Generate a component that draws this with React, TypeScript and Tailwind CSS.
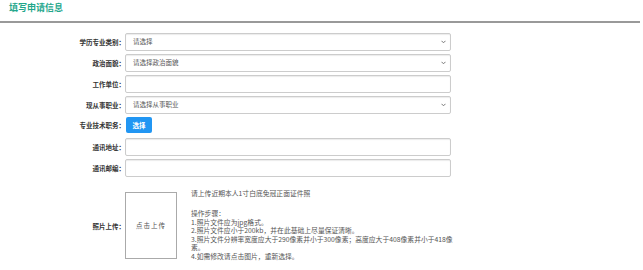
import React from 'react';

const FONT = { fontFamily: '"Noto Sans CJK SC", "Liberation Sans", sans-serif' };

const labelCls = 'w-[125px] shrink-0 text-right text-[6.5px] leading-[8px] font-bold text-[#333]';
const boxCls =
  'w-[326px] h-[18px] border border-[#ccc] rounded-[2px] shadow-[inset_0_1px_1px_rgba(0,0,0,0.08)] bg-white flex items-center pl-[7px] pr-[4px] text-[6.5px] text-[#555]';

const Chevron = () => (
  <svg width="5" height="4" viewBox="0 0 5 4" className="ml-auto">
    <polyline points="0.5,0.8 2.5,2.8 4.5,0.8" fill="none" stroke="#777" strokeWidth="1" />
  </svg>
);

const Row: React.FC<{ label: string; children: React.ReactNode }> = ({ label, children }) => (
  <div className="flex items-center h-[18px] mb-[3px]">
    <div className={labelCls}>{label}</div>
    {children}
  </div>
);

const Select: React.FC<{ placeholder: string }> = ({ placeholder }) => (
  <div className={boxCls}>
    <span>{placeholder}</span>
    <Chevron />
  </div>
);

const Input = () => <div className={boxCls} />;

export default function App() {
  return (
    <div className="w-[643px] h-[270px] bg-white overflow-hidden" style={FONT}>
      <div className="w-[640px] h-[23px] border-b-2 border-[#999] pl-[9px] pt-[2px]">
        <h2 className="text-[9px] leading-[12px] font-bold text-[#22a68b]">填写申请信息</h2>
      </div>

      <div className="pt-[10px]">
        <Row label="学历专业类别：">
          <Select placeholder="请选择" />
        </Row>
        <Row label="政治面貌：">
          <Select placeholder="请选择政治面貌" />
        </Row>
        <Row label="工作单位：">
          <Input />
        </Row>
        <Row label="现从事职业：">
          <Select placeholder="请选择从事职业" />
        </Row>
        <div className="flex items-start h-[18px] mb-[3px]">
          <div className={`${labelCls} mt-[4px]`}>专业技术职务：</div>
          <button className="ml-px h-[16px] w-[26px] rounded-[2px] bg-[#2196f3] text-white text-[6.5px] leading-[16px] font-bold">
            选择
          </button>
        </div>
        <Row label="通讯地址：">
          <Input />
        </Row>
        <Row label="通讯邮编：">
          <Input />
        </Row>

        <div className="flex items-start mt-[15px]">
          <div className={`${labelCls} self-center`}>照片上传：</div>
          <div className="w-[52px] h-[67px] border border-[#aaa] flex items-center justify-center text-[6.5px] text-[#555] tracking-[1px] shrink-0">
            点击上传
          </div>
          <div className="ml-[14px] w-[264px] text-[6.8px] leading-[8.5px] text-[#555] -mt-[3px]">
            <p className="leading-[8px]">请上传近期本人1寸白底免冠正面证件照</p>
            <p className="mt-[12px]">操作步骤：</p>
            <p>1.照片文件应为jpg格式。</p>
            <p>2.照片文件应小于200kb，并在此基础上尽量保证清晰。</p>
            <p>3.照片文件分辨率宽度应大于290像素并小于300像素；高度应大于408像素并小于418像素。</p>
            <p>4.如需修改请点击图片，重新选择。</p>
          </div>
        </div>
      </div>
    </div>
  );
}
